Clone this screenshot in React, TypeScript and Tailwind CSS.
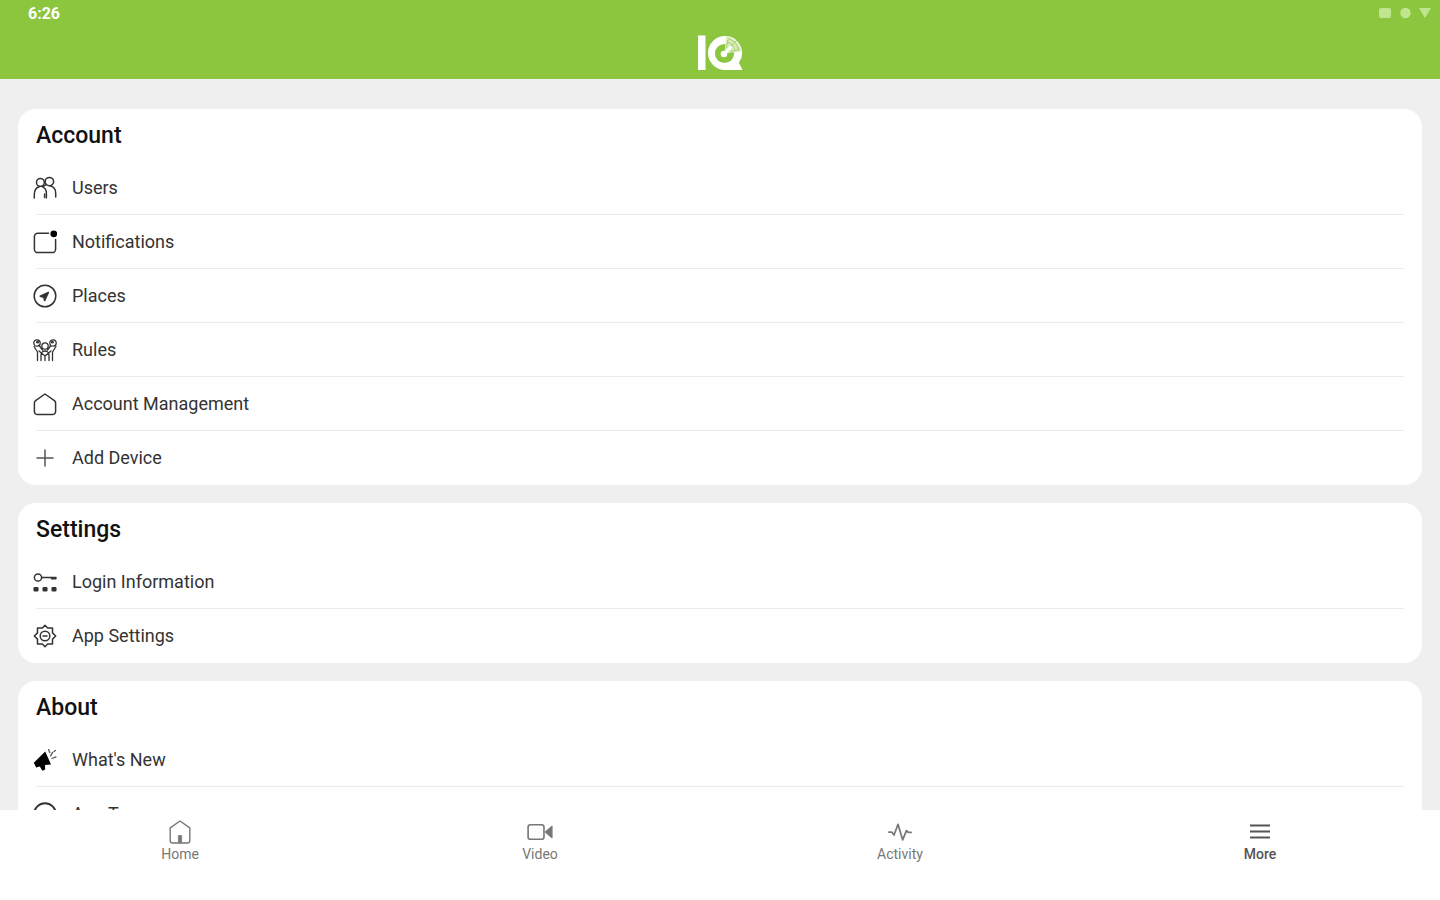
import type { ReactNode } from "react";

type Item = { label: string; icon: ReactNode };

function Icon({ children, className = "size-6" }: { children: ReactNode; className?: string }) {
  return (
    <svg
      viewBox="0 0 24 24"
      className={`${className} shrink-0`}
      fill="none"
      stroke="currentColor"
      strokeWidth="1.5"
      strokeLinecap="round"
      strokeLinejoin="round"
      aria-hidden="true"
    >
      {children}
    </svg>
  );
}

const UsersIcon = (
  <Icon>
    <circle cx="7.4" cy="6.4" r="3.9" />
    <circle cx="16.4" cy="5.6" r="4.2" />
    <path d="M1.3 22v-3.4c0-4.2 2.2-7.4 5.4-8.2M8.6 10.4c3 1 4.8 3.4 4.8 7V22" />
    <path d="m10 10.6 3-2M16.8 9.8c3.6.6 5.9 3.6 5.9 7.6V21M11.6 18v3.4" />
  </Icon>
);

const NotificationsIcon = (
  <Icon>
    <path d="M15.5 3.2H4.8a3.4 3.4 0 0 0-3.4 3.4v12.6a3.4 3.4 0 0 0 3.4 3.4h14.4a3.4 3.4 0 0 0 3.4-3.4V9.5" />
    <circle cx="20.8" cy="3.8" r="3.4" fill="#000" stroke="none" />
  </Icon>
);

const PlacesIcon = (
  <Icon>
    <circle cx="12" cy="12" r="10.8" />
    <path d="M15.4 8.4 7.2 12.2l3.6 1L11.6 16.6z" fill="currentColor" />
  </Icon>
);

const RulesIcon = (
  <Icon>
    <g strokeWidth="1.3">
      <circle cx="4" cy="5" r="3.2" />
      <circle cx="20" cy="5" r="3.2" />
      <circle cx="12" cy="8" r="3.2" />
      <path d="M1 8.5 4.5 14v8.5M23 8.5 19.5 14v8.5M6.5 8l3 4M17.5 8l-3 4" />
      <path d="M8 22.5V17a4 4 0 0 1 8 0v5.5M6 13l6 5 6-5M12 18.5v4" />
    </g>
    <circle cx="4.6" cy="4.2" r="1.4" fill="currentColor" stroke="none" />
    <circle cx="19.4" cy="4.2" r="1.4" fill="currentColor" stroke="none" />
  </Icon>
);

const HouseIcon = (
  <Icon>
    <path d="M12 2 2.6 8.6c-.8.6-1.2 1.4-1.2 2.4v8.6a3 3 0 0 0 3 3h15.2a3 3 0 0 0 3-3V11c0-1-.4-1.8-1.2-2.4z" />
  </Icon>
);

const PlusIcon = (
  <Icon>
    <path d="M12 3.5v17M3.5 12h17" strokeLinecap="butt" stroke="#555" />
  </Icon>
);

const LoginIcon = (
  <Icon>
    <circle cx="5" cy="7.5" r="3.6" />
    <path d="M8.6 7.5H23M18.5 8.8H23" />
    <g fill="currentColor" stroke="none">
      <rect x="0.5" y="17" width="5" height="4.4" rx="1.2" />
      <rect x="9.5" y="17" width="5" height="4.4" rx="1.2" />
      <rect x="18.5" y="17" width="5" height="4.4" rx="1.2" />
    </g>
  </Icon>
);

const GearIcon = (
  <Icon>
    <path d="M12 1.3 14.6 4h4.9v4.9L22.7 12l-3.2 3.1V20h-4.9L12 22.7 9.4 20H4.5v-4.9L1.3 12l3.2-3.1V4h4.9z" />
    <circle cx="12" cy="12" r="4.8" />
    <path d="M10 12h4" />
  </Icon>
);

const MegaphoneIcon = (
  <Icon>
    <path d="M12.2 3.6 18 16.4l-6 .6.2 4.4-2.8 1.3-2.6-4.3-3.6 1.2L.8 14.8z" fill="#000" stroke="none" />
    <path d="m15.6 1.6 1.2 3M17.6 8l2-3.6M19 10.5l4-1.6M21 3.5l1.4-1" strokeWidth="1.3" stroke="#555" />
  </Icon>
);

const CircleIcon = (
  <Icon>
    <circle cx="12" cy="12" r="10.8" strokeWidth="2" />
  </Icon>
);

const sections: { title: string; items: Item[] }[] = [
  {
    title: "Account",
    items: [
      { label: "Users", icon: UsersIcon },
      { label: "Notifications", icon: NotificationsIcon },
      { label: "Places", icon: PlacesIcon },
      { label: "Rules", icon: RulesIcon },
      { label: "Account Management", icon: HouseIcon },
      { label: "Add Device", icon: PlusIcon },
    ],
  },
  {
    title: "Settings",
    items: [
      { label: "Login Information", icon: LoginIcon },
      { label: "App Settings", icon: GearIcon },
    ],
  },
  {
    title: "About",
    items: [
      { label: "What's New", icon: MegaphoneIcon },
      { label: "App Terms", icon: CircleIcon },
    ],
  },
];

const tabs: (Item & { active?: boolean })[] = [
  {
    label: "Home",
    icon: (
      <Icon className="size-7">
        <path d="M12 2.6 3.6 8.4v11a2 2 0 0 0 2 2h12.8a2 2 0 0 0 2-2v-11z" strokeWidth="1.2" />
        <path d="M10.6 21v-6h2.8v6z" fill="currentColor" strokeWidth="0.6" />
      </Icon>
    ),
  },
  {
    label: "Video",
    icon: (
      <Icon className="size-7">
        <rect x="1.8" y="5.8" width="13.6" height="12.4" rx="2" strokeWidth="1.4" />
        <path d="m16.8 12 5.4-4.8v9.6z" fill="currentColor" strokeWidth="1.2" />
      </Icon>
    ),
  },
  {
    label: "Activity",
    icon: (
      <Icon className="size-7">
        <path d="M2.5 12h2.4l2 2.6 3.4-9.2 4 13.4 3.2-8 1.6 1.6h2.4" strokeWidth="1.5" />
      </Icon>
    ),
  },
  {
    label: "More",
    active: true,
    icon: (
      <Icon className="size-7">
        <path d="M3.4 6.4h17.2M3.4 11.6h17.2M3.4 16.7h17.2" strokeWidth="1.6" strokeLinecap="butt" />
      </Icon>
    ),
  },
];

function Logo() {
  return (
    <svg viewBox="0 0 46 36" className="h-9 w-[46px]" role="img" aria-label="IQ">
      <rect x="1" y="0.5" width="7.5" height="34.5" fill="#fff" />
      <path d="M28 1a17 17 0 1 0 0 34h17.5l-3.6-7.2A17 17 0 0 0 28 1z" fill="#fff" />
      <circle cx="27.5" cy="18.5" r="9.6" fill="#8cc63e" />
      <path d="M27.5 18.5 29 1.5a17 17 0 0 1 15 15z" fill="#d9edbd" />
      <g fill="none" stroke="#8cc63e" strokeWidth="0.7">
        <path d="M31 3.6A15 15 0 0 1 41.6 15" />
        <path d="M31 7.2A11.5 11.5 0 0 1 38 14.6" />
        <path d="m32 13 8-8M29.5 13l1.5-8M33.5 16.5l9-2" />
      </g>
      <path d="m27 19 7.5-7.5" stroke="#fff" strokeWidth="2.6" />
      <circle cx="27" cy="19" r="3.3" fill="#fff" />
    </svg>
  );
}

export default function App() {
  return (
    <div className="flex h-screen flex-col bg-[#efefef] font-['Roboto',sans-serif] text-[#333333]">
      <header className="shrink-0 bg-[#8cc63e] pb-2">
        <div className="flex h-7 items-center justify-between pr-2 pl-7">
          <time className="text-base font-bold text-white">6:26</time>
          <svg viewBox="0 0 54 12" className="h-3 w-[54px] fill-[#bfe58f]" aria-hidden="true">
            <rect x="1" y="0" width="12" height="10" rx="2" />
            <circle cx="27.5" cy="5" r="5.2" />
            <path d="M41 0h12l-6 10z" />
          </svg>
        </div>
        <div className="flex h-[43px] items-end justify-center">
          <Logo />
        </div>
      </header>

      <main className="min-h-0 flex-1 overflow-hidden px-[18px] pt-[30px]">
        <div className="flex flex-col gap-[18px]">
          {sections.map((section) => (
            <section key={section.title} className="rounded-[18px] bg-white px-[18px]">
              <h2 className="flex h-[52px] items-center pt-0.5 text-[23px] font-medium text-[#111111]">
                {section.title}
              </h2>
              <ul className="divide-y divide-[#ebebeb]">
                {section.items.map((item) => (
                  <li key={item.label} className="h-[54px]">
                    <a href="#" className="-ml-[3px] flex h-full items-center gap-[15px] text-lg">
                      {item.icon}
                      {item.label}
                    </a>
                  </li>
                ))}
              </ul>
            </section>
          ))}
        </div>
      </main>

      <nav className="grid h-[90px] shrink-0 grid-cols-4 items-start bg-white pt-2">
        {tabs.map((tab) => (
          <a
            key={tab.label}
            href="#"
            aria-current={tab.active ? "page" : undefined}
            className={`flex flex-col items-center text-sm leading-4 ${
              tab.active ? "font-medium text-[#555555]" : "text-[#777777]"
            }`}
          >
            {tab.icon}
            {tab.label}
          </a>
        ))}
      </nav>
    </div>
  );
}
